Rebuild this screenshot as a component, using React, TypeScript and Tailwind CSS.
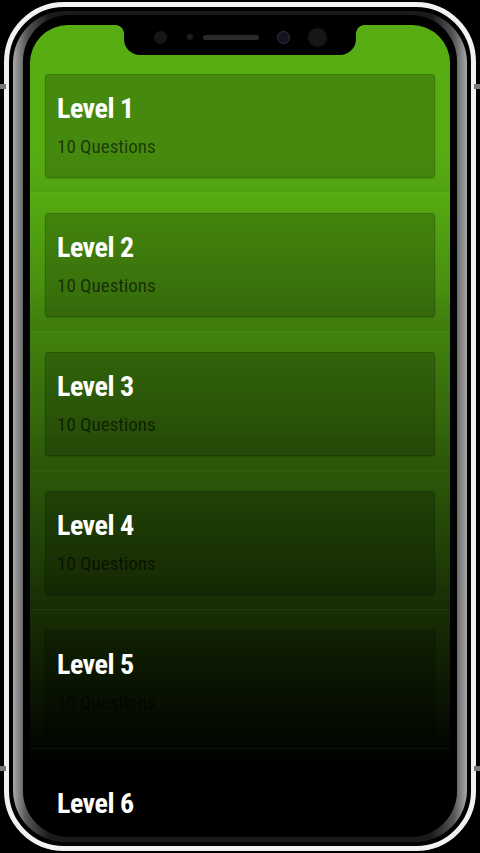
const levels = [1, 2, 3, 4, 5, 6]

function App() {
  return (
    <div className="relative w-[480px] h-[853px] bg-black overflow-hidden px-[4px] pt-[2px] pb-[2px]" style={{ fontFamily: 'Roboto, "Liberation Sans", sans-serif' }}>
      <PhoneFrame>
        <div className="pt-[29px]">
          {levels.map((n) => (
            <LevelRow key={n} level={n} />
          ))}
        </div>
      </PhoneFrame>
      {/* antenna marks on the rim */}
      <div className="absolute left-0 top-[84px] w-[6px] h-[5px] bg-[#777]" />
      <div className="absolute right-0 top-[84px] w-[6px] h-[5px] bg-[#777]" />
      <div className="absolute left-0 top-[766px] w-[6px] h-[5px] bg-[#777]" />
      <div className="absolute right-0 top-[766px] w-[6px] h-[5px] bg-[#777]" />
    </div>
  )
}

export default App

const PhoneFrame = ({ children }: { children: React.ReactNode }) => {
  return (
    <div className="h-full rounded-[60px] border-[5px] border-[#f2f2f2] bg-black p-[4px]">
      <div className="h-full rounded-[52px] bg-[linear-gradient(to_right,#a8a8a8,#555_3%,#1a1a1a_8%,#1a1a1a_92%,#555_97%,#a8a8a8)] px-[10px] pt-[4px] pb-[5px]">
        <div className="h-full rounded-[46px] bg-black px-[7px] pt-[10px] pb-[4px]">
          <div className="relative h-full rounded-[38px] overflow-hidden bg-[linear-gradient(to_bottom,#57ad12_20%,#000000_92%)]">
            <Notch />
            {children}
          </div>
        </div>
      </div>
    </div>
  )
}

const Notch = () => {
  return (
    <div className="absolute left-1/2 -translate-x-1/2 top-0 z-10 w-[232px] h-[30px] bg-black rounded-b-[16px] flex items-center justify-center gap-[10px] pb-[6px]">
      <div className="absolute -left-[8px] top-0 w-[8px] h-[8px] bg-[radial-gradient(circle_at_0_100%,transparent_7.5px,black_8px)]" />
      <div className="absolute -right-[8px] top-0 w-[8px] h-[8px] bg-[radial-gradient(circle_at_100%_100%,transparent_7.5px,black_8px)]" />
      <div className="w-[13px] h-[13px] rounded-full bg-[#161618] mr-[10px]" />
      <div className="w-[6px] h-[6px] rounded-full bg-[#1c1c1e]" />
      <div className="w-[56px] h-[5px] rounded-full bg-[#2a2a2c]" />
      <div className="w-[13px] h-[13px] rounded-full bg-[#141420] border border-[#34344a] ml-[8px]" />
      <div className="w-[19px] h-[19px] rounded-full bg-[#161618] ml-[8px]" />
    </div>
  )
}

const LevelRow = ({ level }: { level: number }) => {
  return (
    <div className="px-[15px] pt-[20px] pb-[14px] border-b border-[rgba(140,255,60,0.06)] bg-[linear-gradient(to_bottom,transparent_70%,rgba(0,0,0,0.06))]">
      <div className="h-[104px] rounded-[4px] border border-black/15 bg-black/20 shadow-[0_1px_2px_rgba(0,0,0,0.15)] px-[11px] pt-[20px]">
        <h2 className="text-[28px] leading-none font-bold text-white tracking-[-0.5px] font-stretch-condensed">Level {level}</h2>
        <p className="mt-[14px] text-[19px] leading-none text-black/60 font-stretch-condensed">10 Questions</p>
      </div>
    </div>
  )
}
